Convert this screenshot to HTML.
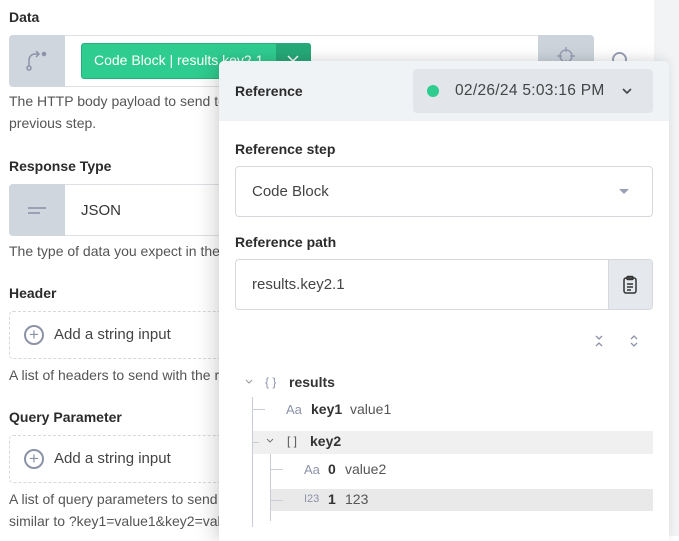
<!DOCTYPE html><html><head><style>
*{box-sizing:border-box;margin:0;padding:0}
body{width:679px;height:536px;overflow:hidden;background:#fff;font-family:"Liberation Sans",sans-serif;position:relative;color:#333}
.a{position:absolute}
.lbl{font-weight:bold;font-size:14px;color:#2b2b2b}
.help{font-size:14px;color:#555;line-height:22px}
.t{font-size:15px;color:#444}
</style></head><body>
<div class="a" style="left:654px;top:0;width:25px;height:536px;background:#f1f3f5"></div>
<div class="a lbl" style="left:9px;top:9px">Data</div>
<div class="a" style="left:9px;top:35px;width:585px;height:52px;border:1px solid #dde1e6;border-radius:4px;background:#fff"></div>
<div class="a" style="left:9px;top:35px;width:56px;height:52px;background:#d0d6de;border-radius:4px 0 0 4px"></div>
<svg class="a" style="left:24px;top:47px" width="26" height="26" viewBox="0 0 26 26" fill="none" stroke="#8c93a8" stroke-width="1.5"><circle cx="5" cy="21" r="2"/><path d="M5 19v-6a6 6 0 0 1 6-6h4M12 4l3 3-3 3"/><circle cx="20" cy="7" r="1.5" fill="#8c93a8"/></svg>
<div class="a" style="left:81px;top:43px;width:230px;height:36px;background:#2fcc8f;border-radius:3px;border:1px solid #27b07c"></div>
<div class="a" style="left:276px;top:43px;width:35px;height:36px;background:#26a878;border-radius:0 3px 3px 0"></div>
<div class="a" style="left:94px;top:52px;color:#fff;font-size:14px">Code Block | results.key2.1</div>
<svg class="a" style="left:286px;top:54px" width="14" height="10"><path d="M2 2l5 5 5-5" stroke="#fff" stroke-width="1.5" fill="none"/></svg>
<div class="a" style="left:538px;top:35px;width:56px;height:52px;background:#ccd3db;border-radius:0 4px 4px 0"></div>
<svg class="a" style="left:556px;top:46px" width="20" height="20" fill="none" stroke="#9aa0b5" stroke-width="1.5"><circle cx="10" cy="10" r="6"/><path d="M10 1v5M10 14v5M1 10h5M14 10h5"/></svg>
<div class="a" style="left:612px;top:52px;width:15px;height:15px;border:2px solid #9aa0b5;border-radius:50%"></div>
<div class="a help" style="left:9px;top:90px;width:600px">The HTTP body payload to send to the URL. This can be a reference to the output of a<br>previous step.</div>
<div class="a lbl" style="left:9px;top:158px">Response Type</div>
<div class="a" style="left:9px;top:184px;width:585px;height:52px;border:1px solid #dde1e6;border-radius:4px"></div>
<div class="a" style="left:9px;top:184px;width:56px;height:52px;background:#d0d6de;border-radius:4px 0 0 4px"></div>
<div class="a" style="left:28px;top:207px;width:18px;height:2px;background:#9aa0b5"></div>
<div class="a" style="left:28px;top:212px;width:12px;height:2px;background:#9aa0b5"></div>
<div class="a t" style="left:81px;top:202px;color:#333">JSON</div>
<div class="a help" style="left:9px;top:240px;width:600px">The type of data you expect in the response.</div>
<div class="a lbl" style="left:9px;top:285px">Header</div>
<div class="a" style="left:9px;top:311px;width:600px;height:48px;border:1px dashed #d5d9de;border-radius:4px"></div>
<div class="a" style="left:24px;top:325px;width:20px;height:20px;border:2px solid #8c93a8;border-radius:50%;color:#8c93a8;font-size:17px;line-height:15px;text-align:center">+</div>
<div class="a" style="left:54px;top:326px;font-size:15px;color:#444">Add a string input</div>
<div class="a help" style="left:9px;top:364px;width:600px">A list of headers to send with the request.</div>
<div class="a lbl" style="left:9px;top:409px">Query Parameter</div>
<div class="a" style="left:9px;top:435px;width:600px;height:48px;border:1px dashed #d5d9de;border-radius:4px"></div>
<div class="a" style="left:24px;top:449px;width:20px;height:20px;border:2px solid #8c93a8;border-radius:50%;color:#8c93a8;font-size:17px;line-height:15px;text-align:center">+</div>
<div class="a" style="left:54px;top:450px;font-size:15px;color:#444">Add a string input</div>
<div class="a help" style="left:9px;top:488px;width:600px">A list of query parameters to send with the request. This is<br>similar to ?key1=value1&amp;key2=value2</div>

<div class="a" style="left:219px;top:61px;width:450px;height:480px;background:#fff;border-radius:5px 5px 0 0;box-shadow:-8px 0 18px rgba(0,0,0,0.12),0 -2px 8px rgba(0,0,0,0.06)">
<div class="a" style="left:0;top:0;width:450px;height:60px;background:#f0f3f6;border-radius:5px 5px 0 0"></div>
<div class="a lbl" style="left:16px;top:22px">Reference</div>
<div class="a" style="left:194px;top:8px;width:240px;height:44px;background:#e2e6ea;border-radius:4px"></div>
<div class="a" style="left:208px;top:24px;width:12px;height:12px;background:#2fcc8f;border-radius:50%"></div>
<div class="a" style="left:236px;top:21px;font-size:15.5px;color:#444;letter-spacing:0.3px">02/26/24 5:03:16 PM</div>
<svg class="a" style="left:402px;top:25px" width="12" height="10"><path d="M2 3l4 4 4-4" stroke="#444" stroke-width="1.6" fill="none"/></svg>
<div class="a lbl" style="left:16px;top:80px">Reference step</div>
<div class="a" style="left:16px;top:105px;width:418px;height:51px;border:1px solid #d5d9de;border-radius:4px"></div>
<div class="a t" style="left:33px;top:122px">Code Block</div>
<div class="a" style="left:400px;top:128px;border-left:5px solid transparent;border-right:5px solid transparent;border-top:5px solid #9aa0b5"></div>
<div class="a lbl" style="left:16px;top:173px">Reference path</div>
<div class="a" style="left:16px;top:198px;width:418px;height:51px;border:1px solid #d5d9de;border-radius:4px;overflow:hidden"><div class="a" style="right:0;top:0;width:44px;height:51px;background:#e5e8ec;border-left:1px solid #d5d9de"></div></div>
<div class="a t" style="left:33px;top:215px">results.key2.1</div>
<svg class="a" style="left:403px;top:214px" width="16" height="20" viewBox="0 0 16 20" fill="none" stroke="#333" stroke-width="1.5"><rect x="2" y="3" width="12" height="15" rx="2"/><rect x="5" y="1.5" width="6" height="3" rx="1"/><path d="M5 9h6M5 12h6M5 15h4"/></svg>
<svg class="a" style="left:375px;top:273px" width="10" height="14" fill="none" stroke="#8c93a8" stroke-width="1.3"><path d="M2 2l3 3 3-3M2 12l3-3 3 3"/></svg>
<svg class="a" style="left:410px;top:273px" width="10" height="14" fill="none" stroke="#8c93a8" stroke-width="1.3"><path d="M2 5l3-3 3 3M2 9l3 3 3-3"/></svg>
<!-- tree -->
<div class="a" style="left:33px;top:370px;width:401px;height:23px;background:#f0f0f0"></div>
<div class="a" style="left:51px;top:428px;width:383px;height:22px;background:#e9e9e9"></div>
<div class="a" style="left:33px;top:336px;width:1px;height:130px;background:#c8ccd8"></div>
<div class="a" style="left:51px;top:393px;width:1px;height:67px;background:#c8ccd8"></div>
<div class="a" style="left:34px;top:348px;width:12px;height:1px;background:#c8ccd8"></div>
<div class="a" style="left:34px;top:381px;width:6px;height:1px;background:#c8ccd8"></div>
<div class="a" style="left:52px;top:408px;width:12px;height:1px;background:#c8ccd8"></div>
<div class="a" style="left:52px;top:439px;width:12px;height:1px;background:#c8ccd8"></div>
<svg class="a" style="left:26px;top:318px" width="8" height="6" fill="none" stroke="#999" stroke-width="1"><path d="M1 1l3 3 3-3"/></svg>
<div class="a" style="left:46px;top:314px;font-size:12px;color:#8c93a8">{ }</div>
<div class="a" style="left:70px;top:313px;font-size:14px;font-weight:bold;color:#333">results</div>
<div class="a" style="left:67px;top:341px;font-size:13px;color:#8c93a8">Aa</div>
<div class="a" style="left:92px;top:340px;font-size:14px;font-weight:bold;color:#333">key1</div>
<div class="a" style="left:131px;top:340px;font-size:14px;color:#555">value1</div>
<svg class="a" style="left:47px;top:377px" width="8" height="6" fill="none" stroke="#777" stroke-width="1"><path d="M1 1l3 3 3-3"/></svg>
<div class="a" style="left:68px;top:373px;font-size:12px;color:#555">[ ]</div>
<div class="a" style="left:91px;top:372px;font-size:14px;font-weight:bold;color:#333">key2</div>
<div class="a" style="left:85px;top:401px;font-size:13px;color:#8c93a8">Aa</div>
<div class="a" style="left:109px;top:400px;font-size:14px;font-weight:bold;color:#333">0</div>
<div class="a" style="left:126px;top:400px;font-size:14px;color:#555">value2</div>
<div class="a" style="left:85px;top:432px;font-size:11px;color:#8c93a8">I23</div>
<div class="a" style="left:109px;top:430px;font-size:14px;font-weight:bold;color:#333">1</div>
<div class="a" style="left:126px;top:430px;font-size:14px;color:#555">123</div>
</div>
</body></html>
